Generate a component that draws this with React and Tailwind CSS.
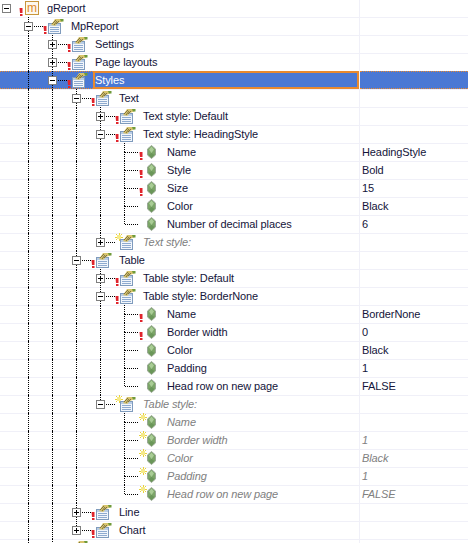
import React from 'react';

const rows = [
  { d: 0, exp: '-', mark: 'err', icon: 'm', label: 'gReport', guides: [] },
  { d: 1, exp: '-', mark: 'err', icon: 'doc', label: 'MpReport', guides: [], up: true, down: true },
  { d: 2, exp: '+', mark: 'err', icon: 'doc', label: 'Settings', guides: [1], up: true, down: true },
  { d: 2, exp: '+', mark: 'err', icon: 'doc', label: 'Page layouts', guides: [1], up: true, down: true },
  { d: 2, exp: '-', mark: 'err', icon: 'doc', label: 'Styles', guides: [1], up: true, down: true, selected: true },
  { d: 3, exp: '-', mark: 'err', icon: 'doc', label: 'Text', guides: [1, 2], up: true, down: true },
  { d: 4, exp: '+', mark: 'err', icon: 'doc', label: 'Text style: Default', guides: [1, 2, 3], up: true, down: true },
  { d: 4, exp: '-', mark: 'err', icon: 'doc', label: 'Text style: HeadingStyle', guides: [1, 2, 3], up: true, down: true },
  { d: 5, mark: 'err', icon: 'gem', label: 'Name', value: 'HeadingStyle', guides: [1, 2, 3, 4], up: true, down: true },
  { d: 5, mark: 'err', icon: 'gem', label: 'Style', value: 'Bold', guides: [1, 2, 3, 4], up: true, down: true },
  { d: 5, mark: 'err', icon: 'gem', label: 'Size', value: '15', guides: [1, 2, 3, 4], up: true, down: true },
  { d: 5, icon: 'gem', label: 'Color', value: 'Black', guides: [1, 2, 3, 4], up: true, down: true },
  { d: 5, icon: 'gem', label: 'Number of decimal places', value: '6', guides: [1, 2, 3, 4], up: true },
  { d: 4, exp: '+', mark: 'new', icon: 'doc', label: 'Text style:', guides: [1, 2, 3], up: true, off: true },
  { d: 3, exp: '-', mark: 'err', icon: 'doc', label: 'Table', guides: [1, 2], up: true, down: true },
  { d: 4, exp: '+', mark: 'err', icon: 'doc', label: 'Table style: Default', guides: [1, 2, 3], up: true, down: true },
  { d: 4, exp: '-', mark: 'err', icon: 'doc', label: 'Table style: BorderNone', guides: [1, 2, 3], up: true, down: true },
  { d: 5, mark: 'err', icon: 'gem', label: 'Name', value: 'BorderNone', guides: [1, 2, 3, 4], up: true, down: true },
  { d: 5, mark: 'err', icon: 'gem', label: 'Border width', value: '0', guides: [1, 2, 3, 4], up: true, down: true },
  { d: 5, icon: 'gem', label: 'Color', value: 'Black', guides: [1, 2, 3, 4], up: true, down: true },
  { d: 5, icon: 'gem', label: 'Padding', value: '1', guides: [1, 2, 3, 4], up: true, down: true },
  { d: 5, icon: 'gem', label: 'Head row on new page', value: 'FALSE', guides: [1, 2, 3, 4], up: true },
  { d: 4, exp: '-', mark: 'new', icon: 'doc', label: 'Table style:', guides: [1, 2, 3], up: true, off: true },
  { d: 5, mark: 'new', icon: 'gem', label: 'Name', guides: [1, 2, 3], up: true, down: true, off: true },
  { d: 5, mark: 'new', icon: 'gem', label: 'Border width', value: '1', guides: [1, 2, 3], up: true, down: true, off: true },
  { d: 5, mark: 'new', icon: 'gem', label: 'Color', value: 'Black', guides: [1, 2, 3], up: true, down: true, off: true },
  { d: 5, mark: 'new', icon: 'gem', label: 'Padding', value: '1', guides: [1, 2, 3], up: true, down: true, off: true },
  { d: 5, mark: 'new', icon: 'gem', label: 'Head row on new page', value: 'FALSE', guides: [1, 2, 3], up: true, off: true },
  { d: 3, exp: '+', mark: 'err', icon: 'doc', label: 'Line', guides: [1, 2], up: true, down: true },
  { d: 3, exp: '+', mark: 'err', icon: 'doc', label: 'Chart', guides: [1, 2], up: true },
  { d: 2, exp: '+', icon: 'doc', label: '', guides: [1], up: true, down: true },
];

function Connector({ exp, up, down, root }) {
  const dots = { stroke: '#000', strokeDasharray: '1 1', shapeRendering: 'crispEdges', fill: 'none' };
  return (
    <svg width="19" height="18" className="shrink-0">
      {up && <line x1="4.5" y1="0" x2="4.5" y2={exp ? 5 : 9} style={dots} />}
      {down && <line x1="4.5" y1={exp ? 14 : 9} x2="4.5" y2="18" style={dots} />}
      {!exp && <line x1="4.5" y1="9.5" x2="19" y2="9.5" style={dots} />}
      {exp && !root && <line x1="10" y1="9.5" x2="19" y2="9.5" style={dots} />}
      {exp && (
        <g transform={root ? 'translate(2 0)' : undefined} shapeRendering="crispEdges">
          <rect x="0.5" y="5.5" width="8" height="8" fill="#fff" stroke="#7f7f7f" />
          <line x1="2" y1="9.5" x2="7" y2="9.5" stroke="#000" />
          {exp === '+' && <line x1="4.5" y1="7" x2="4.5" y2="12" stroke="#000" />}
        </g>
      )}
    </svg>
  );
}

function ErrorMark() {
  return (
    <svg width="4" height="18" className="shrink-0">
      <path d="M0.5 9 L3.5 9 L3.5 14 L1 14 Z" fill="#e0242c" />
      <rect x="1" y="15" width="2.5" height="2" fill="#e0242c" />
    </svg>
  );
}

function NewMark() {
  return (
    <svg width="8" height="18" className="shrink-0 -mr-[4px]">
      <g stroke="#e8d23c" strokeWidth="1" shapeRendering="crispEdges">
        <line x1="4" y1="0" x2="4" y2="8" />
        <line x1="0" y1="4" x2="8" y2="4" />
        <line x1="1" y1="1" x2="7" y2="7" />
        <line x1="7" y1="1" x2="1" y2="7" />
      </g>
      <rect x="2" y="2" width="4" height="4" fill="#f6ea8a" />
    </svg>
  );
}

function DocIcon() {
  return (
    <svg width="17" height="16" viewBox="0 0 17 16" className="shrink-0">
      <rect x="1.5" y="5.5" width="12" height="10" fill="#f2f6fb" stroke="#7f9bbd" />
      <rect x="2" y="6" width="11" height="2" fill="#b9cde6" />
      <g stroke="#8fabd0" shapeRendering="crispEdges">
        <line x1="3" y1="9.5" x2="12" y2="9.5" />
        <line x1="3" y1="11.5" x2="12" y2="11.5" />
        <line x1="3" y1="13.5" x2="12" y2="13.5" />
      </g>
      <path d="M4 7 L8 1 L14 1 L16 3 L11 5 L8 8 Z" fill="#d8c46c" />
      <path d="M5 6 L9 2 M7 7 L10 3 M9 6 L12 3" stroke="#7d7344" strokeWidth="1" fill="none" />
      <path d="M13 1 L16.5 1 L16.5 3.5 L14 3.5 Z" fill="#6f9a3a" />
    </svg>
  );
}

function GemIcon() {
  return (
    <svg width="9" height="14" viewBox="0 0 9 14" className="shrink-0 ml-[4px]">
      <path d="M4.5 0.5 L8.5 4 L8.5 10 L4.5 13.5 L0.5 10 L0.5 4 Z" fill="#7ba567" stroke="#9aa896" />
      <path d="M4.5 1.5 L7 4.5 L4.5 8 L2 4.5 Z" fill="#a9cc95" />
      <path d="M4.5 8 L7.5 10 L4.5 13 L1.5 10 Z" fill="#6a9659" />
    </svg>
  );
}

function Row({ row }) {
  const { d, exp, mark, icon, label, value, guides, up, down, off, selected } = row;
  const cols = [];
  for (let c = 0; c < d; c++) {
    cols.push(
      <div
        key={c}
        className={`ml-[4px] w-[20px] h-[18px] shrink-0 border-l border-dotted ${guides.includes(c) ? 'border-black' : 'border-transparent'}`}
      />
    );
  }
  const textColor = off ? 'text-[#808080] italic' : selected ? 'text-white' : 'text-[#14143a]';
  return (
    <div className={`flex h-[18px] ${selected ? 'bg-[#4a78d4]' : 'shadow-[inset_0_1px_0_#f0f0f8]'}`}>
      <div className={`flex items-center w-[359px] shrink-0 ${selected ? 'h-[18px] border-y border-dotted border-[#e8892f]' : ''}`}>
        <div className={`flex items-center shrink-0 ${selected ? '-my-px' : ''}`}>
          {cols}
          <Connector exp={exp} up={up} down={down} root={d === 0} />
          <div className="w-[4px] flex shrink-0">
            {mark === 'err' && <ErrorMark />}
            {mark === 'new' && <NewMark />}
          </div>
        </div>
        <div className={`shrink-0 flex items-center ${selected ? 'w-[22px]' : 'w-[24px]'}`}>
          {icon === 'doc' && <DocIcon />}
          {icon === 'gem' && <GemIcon />}
          {icon === 'm' && (
            <div className="ml-[2px] w-[14px] h-[14px] flex items-center justify-center border border-[#c8963c] bg-[#fdf8ee] text-[#e08a2a] text-[12px] leading-none">
              m
            </div>
          )}
        </div>
        <div
          className={`flex-1 flex items-center whitespace-nowrap ${textColor} ${selected ? 'h-[18px] -my-px border-2 border-[#e8892f]' : ''}`}
        >
          {label}
        </div>
      </div>
      <div className={`w-[1px] shrink-0 ${selected ? 'bg-[#f4f6fc]' : 'bg-[#f0f0f8]'}`} />
      <div
        className={`flex-1 flex items-center pl-[2px] whitespace-nowrap ${off ? 'text-[#808080] italic' : 'text-[#14143a]'} ${selected ? 'border-y border-dotted border-[#e8892f]' : ''}`}
      >
        {value}
      </div>
    </div>
  );
}

export default function App() {
  return (
    <div className="w-[468px] h-[543px] overflow-hidden bg-white font-['Liberation_Sans',sans-serif] text-[11px] tracking-[-0.1px]">
      <div className="-mt-px">
        {rows.map((row, i) => (
          <Row key={i} row={row} />
        ))}
      </div>
    </div>
  );
}
